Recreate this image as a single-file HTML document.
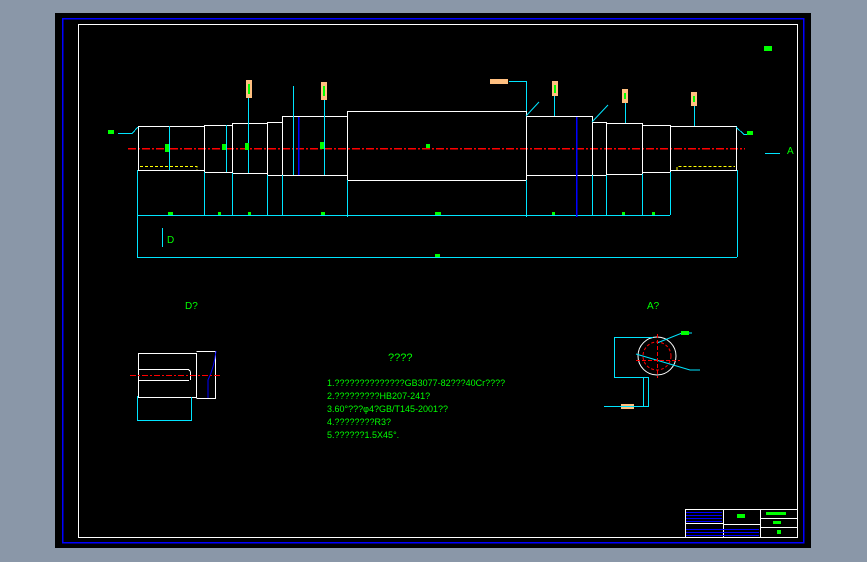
<!DOCTYPE html>
<html><head><meta charset="utf-8"><style>
html,body{margin:0;padding:0;background:#8a97a8;}
svg{display:block}
text{font-family:"Liberation Sans","Noto Sans CJK SC",sans-serif;}
</style></head><body>
<svg width="867" height="562" viewBox="0 0 867 562" xmlns="http://www.w3.org/2000/svg">
<rect x="0" y="0" width="867" height="562" fill="#8a97a8"/>
<rect x="55" y="13" width="756" height="535" fill="#000"/>
<g shape-rendering="crispEdges">
<rect x="62.5" y="18.5" width="741" height="524" fill="none" stroke="#0000ff" stroke-width="1.5"/>
<rect x="78.5" y="24.5" width="719" height="513" fill="none" stroke="#fff" stroke-width="1"/>

<line x1="128" y1="148.5" x2="745" y2="148.5" stroke="#ff0000" stroke-width="1.5" stroke-dasharray="8,2,2,2"/>

<g fill="none" stroke="#fff" stroke-width="1">
<rect x="138.5" y="126.5" width="66" height="44"/>
<rect x="204.5" y="125.5" width="28" height="47"/>
<rect x="232.5" y="123.5" width="35" height="50"/>
<rect x="267.5" y="122.5" width="15" height="53"/>
<rect x="282.5" y="116.5" width="65" height="59"/>
<rect x="347.5" y="111.5" width="179" height="69"/>
<rect x="526.5" y="116.5" width="66" height="59"/>
<rect x="592.5" y="122.5" width="14" height="53"/>
<rect x="606.5" y="123.5" width="36" height="51"/>
<rect x="642.5" y="125.5" width="28" height="47"/>
<rect x="670.5" y="126.5" width="66" height="44"/>
</g>
<path d="M140 166.5H197V170" fill="none" stroke="#ff0" stroke-dasharray="3,2"/>
<path d="M677 170V166.5H735" fill="none" stroke="#ff0" stroke-dasharray="3,2"/>

<g stroke="#00e5ff" stroke-width="1" fill="none">
<line x1="137" y1="215.5" x2="670" y2="215.5"/>
<line x1="137" y1="257.5" x2="737" y2="257.5"/>
<line x1="137.5" y1="170" x2="137.5" y2="257"/>
<line x1="737.5" y1="170" x2="737.5" y2="257"/>
<line x1="204.5" y1="172" x2="204.5" y2="216"/>
<line x1="232.5" y1="173" x2="232.5" y2="216"/>
<line x1="267.5" y1="175" x2="267.5" y2="215"/>
<line x1="282.5" y1="175" x2="282.5" y2="215"/>
<line x1="347.5" y1="180" x2="347.5" y2="217"/>
<line x1="526.5" y1="180" x2="526.5" y2="217"/>
<line x1="592.5" y1="175" x2="592.5" y2="216"/>
<line x1="606.5" y1="175" x2="606.5" y2="216"/>
<line x1="642.5" y1="174" x2="642.5" y2="215"/>
<line x1="670.5" y1="172" x2="670.5" y2="215"/>
<line x1="169.5" y1="126" x2="169.5" y2="170"/>
<line x1="226.5" y1="125" x2="226.5" y2="172"/>
<line x1="248.5" y1="98" x2="248.5" y2="173"/>
<line x1="293.5" y1="86" x2="293.5" y2="175"/>
<line x1="324.5" y1="98" x2="324.5" y2="175"/>
<line x1="554.5" y1="96" x2="554.5" y2="116"/>
<line x1="625.5" y1="102" x2="625.5" y2="123"/>
<line x1="694.5" y1="105" x2="694.5" y2="126"/>
<path d="M509 81.5H526.5V111"/>
<path d="M118 133.5H132L138 127"/>
<path d="M736 127L744 134.5H753"/>
<line x1="765" y1="153.5" x2="780" y2="153.5"/>
<line x1="162.5" y1="228" x2="162.5" y2="247"/>
</g>
<g stroke="#00e5ff" fill="none" shape-rendering="auto">
<path d="M526 116L539 102"/>
<path d="M592 122L608 105"/>
</g>
<g stroke="#0000ff" stroke-width="1.5">
<line x1="298.5" y1="117" x2="298.5" y2="175"/>
<line x1="576.5" y1="117" x2="576.5" y2="217"/>
</g>
<g fill="#00ff00" font-size="10">
<rect x="108" y="130" width="6" height="4"/>
<rect x="747" y="131" width="6" height="4"/>
<rect x="435" y="212" width="6" height="3"/>
<rect x="435" y="254" width="5" height="3"/>
<rect x="168" y="212" width="5" height="3"/>
<rect x="248" y="212" width="3" height="3"/><rect x="218" y="212" width="3" height="3"/><rect x="321" y="212" width="4" height="3"/>
<rect x="552" y="212" width="3" height="3"/><rect x="622" y="212" width="3" height="3"/><rect x="652" y="212" width="3" height="3"/>
<rect x="165" y="144" width="4" height="8"/><rect x="222" y="144" width="4" height="6"/><rect x="245" y="143" width="4" height="7"/>
<rect x="320" y="142" width="4" height="7"/><rect x="426" y="144" width="4" height="4"/>
<rect x="764" y="46" width="8" height="5"/>
</g>
<g fill="#ffbf80">
<rect x="246" y="80" width="6" height="18"/><rect x="321" y="82" width="6" height="18"/>
<rect x="552" y="81" width="6" height="15"/><rect x="622" y="89" width="6" height="14"/><rect x="691" y="92" width="6" height="14"/>
<rect x="490" y="79" width="18" height="5"/><rect x="621" y="404" width="13" height="5"/>
</g>
<g fill="#00ff00">
<rect x="248" y="84" width="2" height="10"/><rect x="323" y="86" width="2" height="10"/><rect x="554" y="85" width="2" height="8"/><rect x="624" y="93" width="2" height="6"/><rect x="693" y="96" width="2" height="6"/>
</g>

<g fill="none" stroke="#fff">
<path d="M138.5 353.5H196.5V397.5H138.5Z"/>
<path d="M196.5 351.5H215.5V398.5H196.5"/>
<path d="M138.5 369.5H187Q190.5 369.5 190.5 373V380"/>
<path d="M138.5 380.5H189"/>
</g>
<path d="M216 351Q214 368 208 380V398" fill="none" stroke="#0000ff" shape-rendering="auto"/>
<path d="M137.5 396V420.5H191.5V397" fill="none" stroke="#00e5ff"/>
<line x1="130" y1="375.5" x2="220" y2="375.5" stroke="#f00" stroke-dasharray="6,2,2,2"/>

<g fill="#00ff00" font-size="9" shape-rendering="auto">
<text x="388" y="361" font-size="11">????</text>
<text x="327" y="386">1.??????????????GB3077-82???40Cr????</text>
<text x="327" y="399">2.?????????HB207-241?</text>
<text x="327" y="412">3.60°???φ4?GB/T145-2001??</text>
<text x="327" y="425">4.????????R3?</text>
<text x="327" y="438">5.??????1.5X45°.</text>
<text x="167" y="243" font-size="10">D</text>
<text x="787" y="154" font-size="10">A</text>
<text x="185" y="309" font-size="10">D?</text>
<text x="647" y="309" font-size="10">A?</text>
</g>

<g shape-rendering="auto">
<circle cx="657" cy="356" r="19" fill="none" stroke="#fff"/>
<circle cx="657" cy="356" r="14" fill="none" stroke="#f00" stroke-dasharray="3,2"/>
<path d="M657 343L682 333H692" fill="none" stroke="#00e5ff"/>
<path d="M636 354L690 370H700" fill="none" stroke="#00e5ff"/>
</g>
<line x1="657.5" y1="334" x2="657.5" y2="378" stroke="#f00" stroke-dasharray="4,2"/>
<line x1="636" y1="360.5" x2="680" y2="360.5" stroke="#f00" stroke-dasharray="4,2"/>
<g fill="none" stroke="#00e5ff">
<path d="M653 337.5H614.5V377.5H643.5V406.5H604"/>
<path d="M643 377.5H648.5V406.5H642"/>
</g>
<rect x="681" y="331" width="8" height="4" fill="#00ff00"/>

<g fill="none" stroke="#fff">
<rect x="685.5" y="509.5" width="112" height="28"/>
<line x1="723.5" y1="509" x2="723.5" y2="537"/>
<line x1="760.5" y1="509" x2="760.5" y2="537"/>
<line x1="760" y1="518.5" x2="797" y2="518.5"/>
<line x1="760" y1="527.5" x2="797" y2="527.5"/>
<line x1="723" y1="524.5" x2="760" y2="524.5"/>
<line x1="685" y1="523.5" x2="723" y2="523.5"/>
</g>
<g stroke="#0000ff">
<line x1="686" y1="512.5" x2="722" y2="512.5"/><line x1="686" y1="515.5" x2="722" y2="515.5"/><line x1="686" y1="518.5" x2="722" y2="518.5"/><line x1="686" y1="521.5" x2="722" y2="521.5"/>
<line x1="686" y1="529.5" x2="759" y2="529.5"/><line x1="686" y1="532.5" x2="759" y2="532.5"/><line x1="686" y1="535.5" x2="759" y2="535.5"/>
</g>
<g fill="#00ff00"><rect x="737" y="514" width="8" height="4"/><rect x="766" y="512" width="20" height="3"/><rect x="773" y="521" width="8" height="3"/><rect x="777" y="530" width="4" height="4"/></g>
</g>
</svg>
</body></html>
